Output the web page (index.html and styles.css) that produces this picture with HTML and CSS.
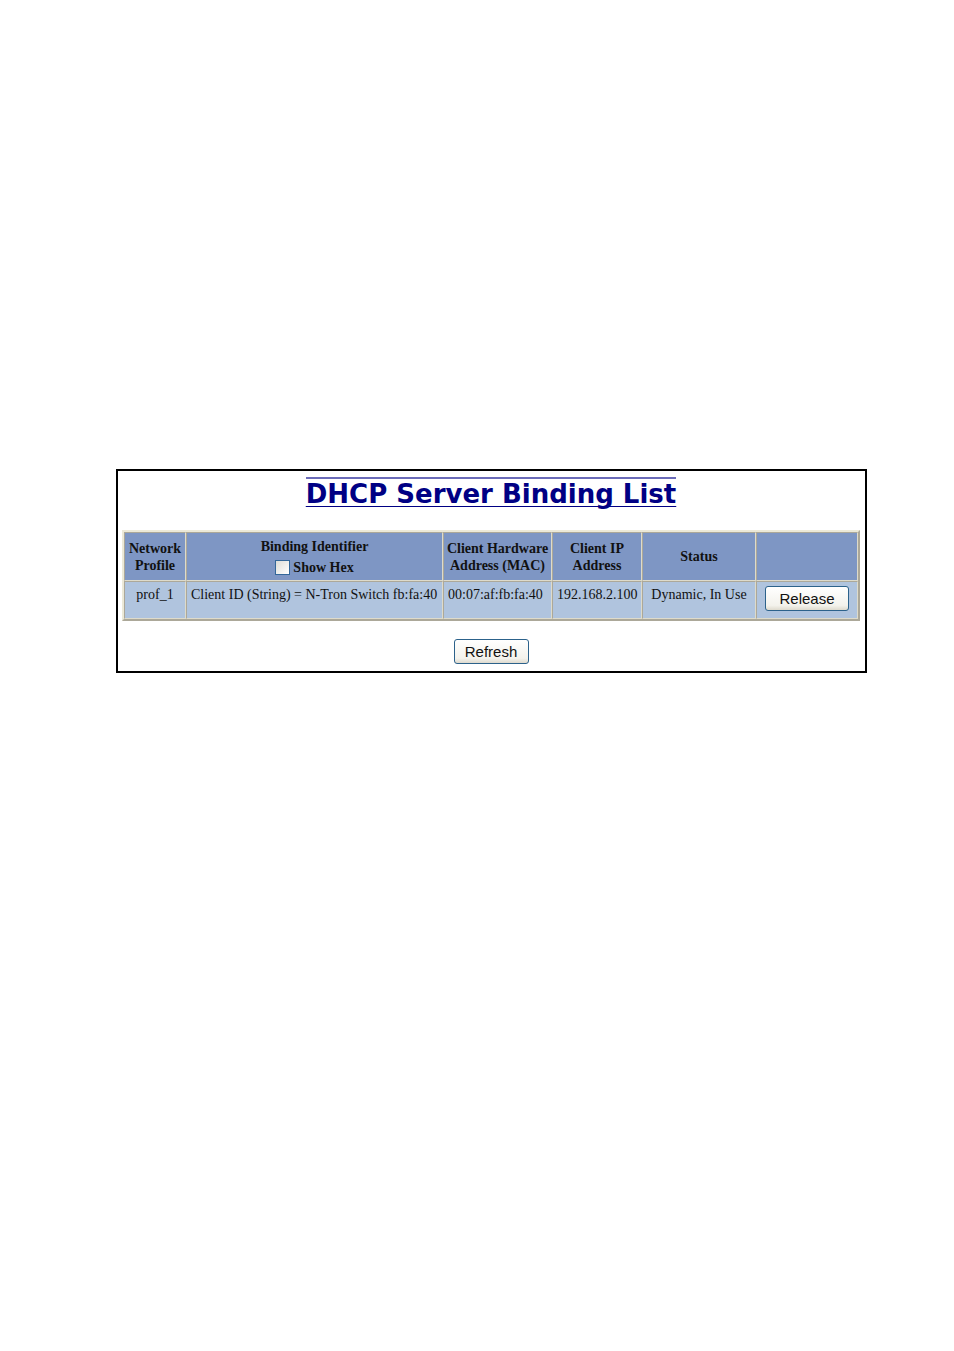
FILE: index.html
```
<!DOCTYPE html>
<html lang="en">
<head>
    <meta charset="UTF-8">
    <meta name="viewport" content="width=device-width, initial-scale=1.0">
    <title>DHCP Server Binding List</title>
    <link rel="stylesheet" href="styles.css">
</head>
<body>
    <main class="panel">
        <h1><span class="title">DHCP Server Binding List</span></h1>

        <table class="bindings">
            <colgroup>
                <col class="col-profile">
                <col class="col-identifier">
                <col class="col-mac">
                <col class="col-ip">
                <col class="col-status">
                <col class="col-action">
            </colgroup>
            <thead>
                <tr>
                    <th>Network<br>Profile</th>
                    <th>
                        Binding Identifier
                        <div class="show-hex">
                            <input type="checkbox" id="showHex">
                            <label for="showHex">Show Hex</label>
                        </div>
                    </th>
                    <th>Client Hardware<br>Address (MAC)</th>
                    <th>Client IP<br>Address</th>
                    <th>Status</th>
                    <th></th>
                </tr>
            </thead>
            <tbody>
                <tr>
                    <td class="center">prof_1</td>
                    <td>Client ID (String) = N-Tron Switch fb:fa:40</td>
                    <td>00:07:af:fb:fa:40</td>
                    <td>192.168.2.100</td>
                    <td class="center">Dynamic, In Use</td>
                    <td class="center"><button type="button" class="release">Release</button></td>
                </tr>
            </tbody>
        </table>

        <button type="button" class="refresh">Refresh</button>
    </main>
</body>
</html>
```
FILE: styles.css
```
body {
    margin: 0;
    padding: 469px 87px 0 116px;
    background-color: #fff;
    color: #111;
    font-family: "Liberation Serif", "Times New Roman", serif;
    font-size: 14px;
}
.panel {
    border: 2px solid #000;
    padding: 6px 5px 7px 4px;
    text-align: center;
}
h1 {
    margin: 0 0 20px;
    font-family: "DejaVu Sans", Verdana, sans-serif;
    font-size: 26px;
    line-height: 32px;
    color: #000084;
}
.title {
    display: inline-block;
    border-top: 2px solid #6b6bb8;
    line-height: 30px;
    text-decoration: underline;
    text-decoration-color: #000084;
    text-decoration-thickness: 1px;
    text-underline-offset: 3px;
    text-decoration-skip-ink: none;
}
.bindings {
    width: 100%;
    table-layout: fixed;
    border: 2px solid;
    border-color: #ece9d8 #aca899 #aca899 #ece9d8;
    border-spacing: 0;
    line-height: 17px;
}
.bindings th,
.bindings td {
    border: 1px solid;
    border-color: #aca899 #dedbcb #dedbcb #aca899;
    white-space: nowrap;
}
.bindings th {
    height: 47px;
    padding: 0;
    background-color: #7e96c4;
}
.bindings td {
    height: 28px;
    padding: 4px 4px;
    background-color: #b0c4de;
    text-align: left;
    vertical-align: top;
}
.bindings .center {
    text-align: center;
}
.col-profile {
    width: 62px;
}
.col-mac {
    width: 109px;
}
.col-ip {
    width: 90px;
}
.col-status {
    width: 114px;
}
.col-action {
    width: 102px;
}
.show-hex {
    display: flex;
    justify-content: center;
    align-items: center;
    gap: 3px;
    padding-top: 4px;
}
.show-hex input {
    appearance: none;
    width: 15px;
    height: 15px;
    margin: 0;
    border: 1px solid #336699;
    background: linear-gradient(135deg, #dcdcd7, #fff);
}
button {
    height: 25px;
    padding: 0;
    border: 1px solid #2c628b;
    border-radius: 3px;
    background: linear-gradient(#fff, #f3f2ec 80%, #dedace);
    color: #111;
    font-family: "Liberation Sans", Arial, sans-serif;
    font-size: 15px;
}
.release {
    width: 84px;
}
.refresh {
    width: 75px;
    margin-top: 18px;
}
```
